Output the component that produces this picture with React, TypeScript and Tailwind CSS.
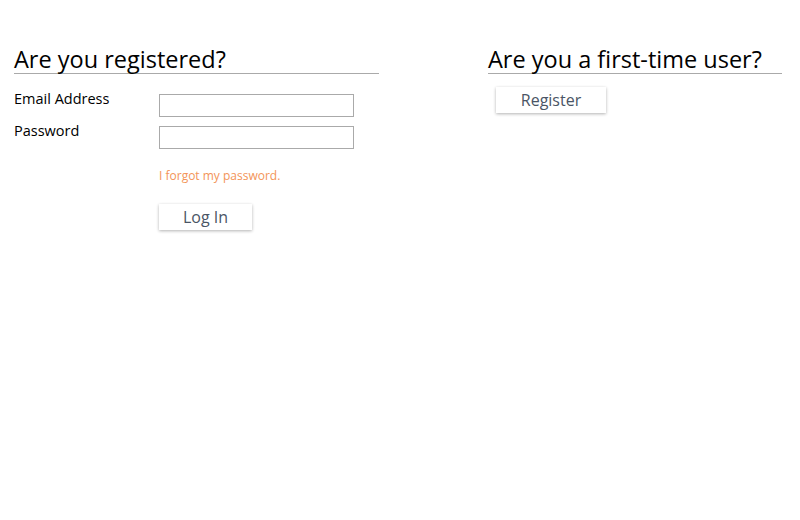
export default function App() {
  return (
    <div className="w-[800px] h-[520px] bg-white text-black" style={{ fontFamily: '"Open Sans", sans-serif' }}>
      <div className="flex pt-[41px] pl-[14px]">
        <div className="w-[365px]">
          <h2 className="text-[23.5px] leading-[28px] pt-[4px] border-b border-[#aaaaaa]">Are you registered?</h2>
          <div className="mt-[20px] flex items-start">
            <label className="w-[145px] text-[14.5px] leading-[20px] -mt-[5px]">Email Address</label>
            <input className="w-[195px] h-[23px] border border-[#aaaaaa] outline-none" />
          </div>
          <div className="mt-[9px] flex items-start">
            <label className="w-[145px] text-[14.5px] leading-[20px] -mt-[5px]">Password</label>
            <input type="password" className="w-[195px] h-[23px] border border-[#aaaaaa] outline-none" />
          </div>
          <div className="pl-[145px]">
            <div className="mt-[18px] text-[12px] leading-[17px] text-[#f39458]">I forgot my password.</div>
            <button className="mt-[20px] w-[93px] h-[26px] bg-white text-[16px] leading-[22px] text-[#4a5565] shadow-[0_1px_3px_rgba(0,0,0,0.3)]">Log In</button>
          </div>
        </div>
        <div className="ml-[109px] w-[294px]">
          <h2 className="text-[23.5px] leading-[28px] pt-[4px] border-b border-[#aaaaaa]">Are you a first-time user?</h2>
          <button className="mt-[13px] ml-[8px] w-[110px] h-[26px] bg-white text-[16px] leading-[22px] text-[#4a5565] shadow-[0_1px_3px_rgba(0,0,0,0.3)]">Register</button>
        </div>
      </div>
    </div>
  );
}
